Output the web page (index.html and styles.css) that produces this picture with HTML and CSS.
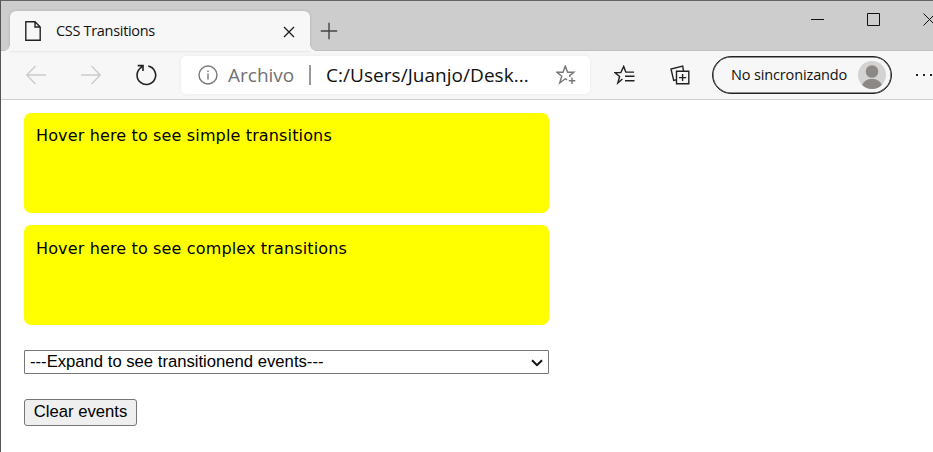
FILE: index.html
```html
<!DOCTYPE html>
<html lang="es">
<head>
<meta charset="utf-8">
<title>CSS Transitions</title>
<link rel="stylesheet" href="styles.css">
</head>
<body>
<div class="window">
  <header class="tabstrip">
    <div class="tab">
      <svg class="tab-icon" width="18" height="22" viewBox="0 0 18 22"><path d="M1.8 1.8H11L16.2 7V20.2H1.8ZM11 1.8V7H16.2"/></svg>
      <span class="tab-title">CSS Transitions</span>
      <svg class="tab-close" width="12" height="12" viewBox="0 0 12 12"><path d="M1 1L11 11M11 1L1 11"/></svg>
    </div>
    <svg class="new-tab" width="18" height="18" viewBox="0 0 18 18"><path d="M9 .8V17.2M.8 9H17.2"/></svg>
    <div class="window-controls">
      <svg width="13" height="14" viewBox="0 0 13 14"><path d="M0 6.5H13"/></svg>
      <svg width="13" height="14" viewBox="0 0 13 14"><path d="M.5 .5H12.5V12.5H.5Z"/></svg>
      <svg width="13" height="14" viewBox="0 0 13 14"><path d="M.5 .5L12.5 12.5M12.5 .5L.5 12.5"/></svg>
    </div>
  </header>
  <nav class="toolbar">
    <svg class="back" width="20" height="20" viewBox="0 0 20 20"><path d="M20 10H1M9.5 1L.8 10L9.5 19"/></svg>
    <svg class="forward" width="20" height="20" viewBox="0 0 20 20"><path d="M0 10H19M10.5 1L19.2 10L10.5 19"/></svg>
    <svg class="reload" width="22" height="22" viewBox="0 0 22 22"><path d="M13.3 2.1A9.3 9.3 0 1 1 5.6 3.9L7.6 2M2.7 1.6H8V6.9"/></svg>
    <div class="address">
      <svg class="info" width="20" height="20" viewBox="0 0 20 20"><circle cx="10" cy="10" r="9"/><path d="M10 8.6V14.4M10 5.4V7"/></svg>
      <span class="scheme">Archivo</span>
      <span class="divider"></span>
      <span class="url">C:/Users/Juanjo/Desk...</span>
      <svg class="add-star" width="20" height="20" viewBox="0 0 20 20"><path d="M11 14.9L9.3 13.8L3.7 18L5.8 11.3L.9 7.3H7L9.3 1L11.6 7.3H17.8L13.7 10.6L14 12M16 12.5V19M12.8 15.8H19.3"/></svg>
    </div>
    <svg class="favorites" width="22" height="20" viewBox="0 0 22 20"><path d="M8.4 14L3.8 18L5.6 11.5L1 7.6H6.8L9.7 1.4L11.8 7.1H20M11 11.3H20.5M11 15.7H20.5"/></svg>
    <svg class="collections" width="20" height="20" viewBox="0 0 20 20"><path d="M6.5 6.3H18.8V18.8H6.5ZM12.6 9V16M9 12.6H16.2M13.5 6L12.7 1.1L1 4L3.7 15.4L6.3 14.8"/></svg>
    <div class="profile">
      <span class="profile-label">No sincronizando</span>
      <svg class="avatar" width="28" height="28" viewBox="0 0 28 28"><circle class="avatar-bg" cx="14" cy="14" r="14"/><circle class="person" cx="14" cy="10.5" r="6.3"/><path class="person" d="M4.2 24C6 19.8 9.5 18 14 18S22 19.8 23.8 24A14 14 0 0 1 4.2 24Z"/></svg>
    </div>
    <div class="more"><i></i><i></i><i></i></div>
  </nav>
  <main>
    <div class="box">Hover here to see simple transitions</div>
    <div class="box box-complex">Hover here to see complex transitions</div>
    <div class="select" role="combobox" tabindex="0"><span>---Expand to see transitionend events---</span><svg width="12" height="8" viewBox="0 0 12 8"><path d="M1 1.2L6 6.2L11 1.2"/></svg></div>
    <button class="clear">Clear events</button>
  </main>
</div>
</body>
</html>
```
FILE: styles.css
```css
* { box-sizing: border-box; }
body { margin: 0; background: #fff; overflow: hidden; }
svg { display: block; flex: none; fill: none; stroke: #222; stroke-width: 1.4; }
.window {
  width: 933px; height: 452px; overflow: hidden;
  border-top: 1px solid #666364; border-left: 1px solid #555;
  font-family: "Open Sans", "Noto Sans", sans-serif;
}
.tabstrip {
  display: flex; height: 50px; padding: 10px 0 0 9px;
  background: linear-gradient(#cdcdcd 49px, #c0c0c0 49px);
}
.tab {
  position: relative; display: flex; align-items: center; flex: none;
  width: 300px; height: 40px; padding: 0 15px 0 14px;
  background: #f7f7f7; border-radius: 6px 6px 0 0;
  box-shadow: 0 0 3px rgba(0,0,0,.16);
}
.tab::before, .tab::after {
  content: ""; position: absolute; bottom: 0; width: 6px; height: 6px;
}
.tab::before { left: -6px; background: radial-gradient(circle at 0 0, transparent 5.5px, #f7f7f7 6px); }
.tab::after { right: -6px; background: radial-gradient(circle at 100% 0, transparent 5.5px, #f7f7f7 6px); }
.tab-title { margin-left: 14px; flex: 1; font-size: 14.5px; line-height: 20px; letter-spacing: -.31px; color: #111; white-space: nowrap; }
.tab-close { margin-top: 2px; }
.new-tab { margin: 11px 0 0 10px; stroke: #444; }
.window-controls { display: flex; flex: none; gap: 43px; margin: 2px 0 0 473px; }
.window-controls svg { stroke: #111; stroke-width: 1; }
.toolbar {
  display: flex; align-items: center; height: 49px;
  background: #f7f7f7; border-bottom: 1px solid #cfcfcf;
}
.back { margin-left: 25px; }
.forward { margin-left: 35px; }
.back, .forward { stroke: #ccc; }
.reload { margin-left: 34px; stroke-width: 1.6; }
.address {
  display: flex; align-items: center; flex: none;
  width: 409px; height: 38px; margin-left: 24px; padding: 0 14px 0 17px;
  border-radius: 5px; background: #fff; box-shadow: 0 0 4px rgba(0,0,0,.06);
  font-size: 19px; line-height: 26px; white-space: nowrap;
}
.info, .add-star { stroke: #777; }
.scheme { width: 67px; margin-left: 10px; color: #717171; }
.divider { width: 2px; height: 20px; margin-left: 14px; background: #999; }
.url { flex: 1; margin-left: 15px; letter-spacing: .04px; color: #111; }
.favorites { margin-left: 24px; }
.collections { margin-left: 34px; }
.profile {
  display: flex; align-items: center; justify-content: space-between; flex: none;
  width: 180px; height: 38px; margin-left: 22px; padding: 0 5px 0 18px;
  border: 1.5px solid #222; border-radius: 19px;
  box-shadow: inset 0 0 0 .5px #222;
}
.profile-label { font-size: 14.5px; line-height: 20px; letter-spacing: -.14px; color: #111; white-space: nowrap; }
.avatar { stroke: none; }
.avatar-bg { fill: #d5d3d1; }
.person { fill: #8b8886; }
.more { display: flex; flex: none; gap: 5px; margin-left: 24px; }
.more i { width: 2px; height: 2px; background: #222; }
main { padding: 13px 0 0 23px; font: 16px "DejaVu Sans", Verdana, sans-serif; color: #000; }
.box { width: 525px; height: 100px; margin-bottom: 12px; padding: 13px 12px; line-height: 20px; letter-spacing: .145px; background: #ff0; border-radius: 7px; }
.box-complex { padding-top: 14px; }
.select {
  display: flex; align-items: center; justify-content: space-between;
  width: 525px; height: 24px; margin-top: 25px; padding: 0 5px;
  border: 1px solid #767676; border-radius: 1px; font: 16.67px/22px "Liberation Sans", Arial, sans-serif;
}
.select svg { stroke: #111; stroke-width: 2; margin-top: 1px; }
.clear {
  display: block; width: 113px; height: 27px; margin-top: 25px; padding: 0 0 1px;
  border: 1px solid #767676; border-radius: 3px; background: #efefef; color: #000;
  font: 16.67px "Liberation Sans", Arial, sans-serif; white-space: nowrap;
}
```
